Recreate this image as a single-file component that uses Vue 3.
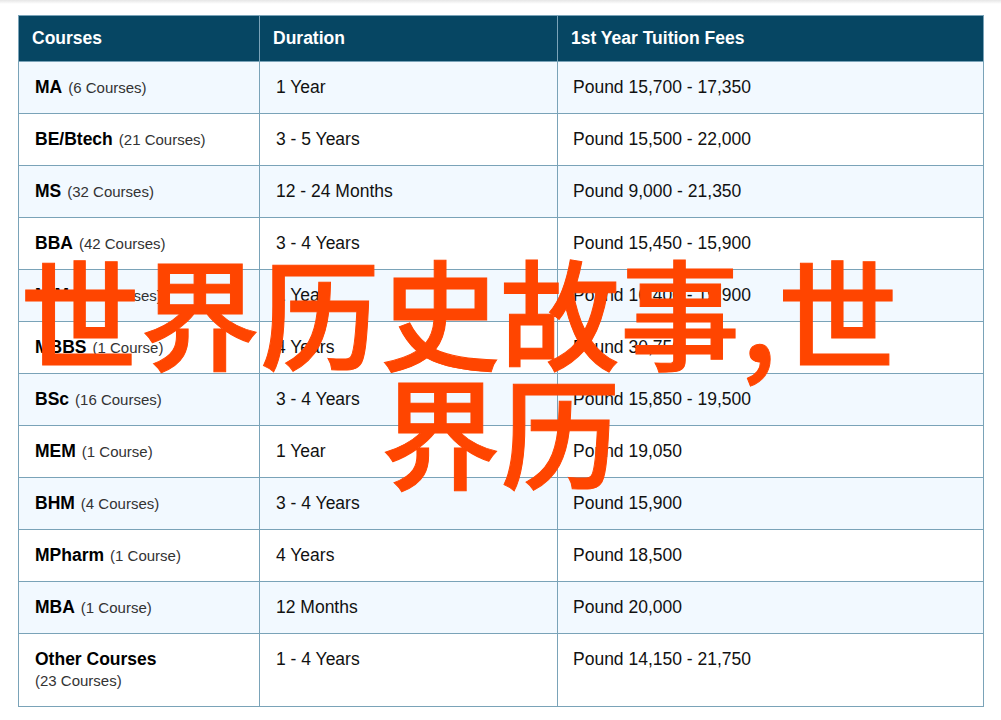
<script setup>
const rows = [
  { name: 'MA', note: '(6 Courses)', time: '1 Year', fee: 'Pound 15,700 - 17,350' },
  { name: 'BE/Btech', note: '(21 Courses)', time: '3 - 5 Years', fee: 'Pound 15,500 - 22,000' },
  { name: 'MS', note: '(32 Courses)', time: '12 - 24 Months', fee: 'Pound 9,000 - 21,350' },
  { name: 'BBA', note: '(42 Courses)', time: '3 - 4 Years', fee: 'Pound 15,450 - 15,900' },
  { name: 'MIM', note: '(12 Courses)', time: '1 Year', fee: 'Pound 16,400 - 19,900' },
  { name: 'MBBS', note: '(1 Course)', time: '4 Years', fee: 'Pound 30,750' },
  { name: 'BSc', note: '(16 Courses)', time: '3 - 4 Years', fee: 'Pound 15,850 - 19,500' },
  { name: 'MEM', note: '(1 Course)', time: '1 Year', fee: 'Pound 19,050' },
  { name: 'BHM', note: '(4 Courses)', time: '3 - 4 Years', fee: 'Pound 15,900' },
  { name: 'MPharm', note: '(1 Course)', time: '4 Years', fee: 'Pound 18,500' },
  { name: 'MBA', note: '(1 Course)', time: '12 Months', fee: 'Pound 20,000' },
  { name: 'Other Courses', note: '(23 Courses)', time: '1 - 4 Years', fee: 'Pound 14,150 - 21,750', tall: true },
]
</script>

<template>
  <div class="page">
    <table class="fees">
      <colgroup>
        <col class="c1" />
        <col class="c2" />
        <col class="c3" />
      </colgroup>
      <thead>
        <tr>
          <th>Courses</th>
          <th>Duration</th>
          <th>1st Year Tuition Fees</th>
        </tr>
      </thead>
      <tbody>
        <tr v-for="r in rows" :key="r.name" :class="{ tall: r.tall }">
          <td class="course">
            <b>{{ r.name }}</b>
            <span class="note">{{ r.note }}</span>
          </td>
          <td class="time">{{ r.time }}</td>
          <td class="fee">{{ r.fee }}</td>
        </tr>
      </tbody>
    </table>
    <h1 class="title">
      <span class="l1">世界历史故事<span class="comma">,</span>世</span>
      <span class="l2">界历</span>
    </h1>
  </div>
</template>

<style>
html, body { margin: 0; background: #fff; }
</style>

<style scoped>
.page {
  position: relative;
  width: 1001px;
  height: 720px;
  overflow: hidden;
  box-sizing: border-box;
  padding: 15px 18px 0;
  background: linear-gradient(#e6e6e6, #fff 4px);
  font-family: "Liberation Sans", Arial, sans-serif;
}
.fees {
  width: 965px;
  table-layout: fixed;
  border-collapse: collapse;
  font-size: 17.5px;
  color: #111;
}
.c1 { width: 241px; }
.c2 { width: 298px; }
.c3 { width: 426px; }
th, td { border: 1px solid #7aa3b8; vertical-align: top; text-align: left; }
th {
  height: 45px;
  box-sizing: border-box;
  padding: 12px 13px;
  background: #064663;
  color: #fff;
  font-weight: 700;
  line-height: 21px;
}
td { height: 51px; box-sizing: border-box; padding: 14px 16px; line-height: 22px; }
tbody tr:nth-child(odd) { background: #f2f9ff; }
tr.tall td { height: 72px; }
.course { padding-top: 14px; }
.course b { color: #000; margin-right: 6px; }
.time { padding-left: 16px; }
.fee { padding-left: 15px; }
.note { font-size: 15px; color: #333; }
tr.tall .note { display: block; line-height: 22px; }
.title {
  position: absolute;
  left: 0;
  top: 251px;
  width: 1001px;
  margin: 0;
  font-family: "Noto Sans CJK SC", sans-serif;
  font-size: 120px;
  font-weight: 500;
  line-height: 119px;
  color: #ff4500;
  -webkit-text-stroke: 1px #ff4500;
}
.comma { margin: 0 1px; }
.l1 { display: block; padding-left: 20px; white-space: nowrap; }
.l2 { display: block; text-align: center; }
</style>
